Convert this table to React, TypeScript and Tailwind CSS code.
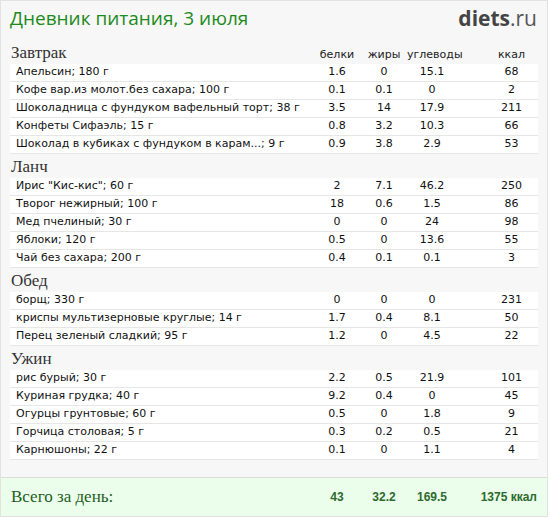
import React from "react";

type Item = { name: string; p: string; f: string; c: string; kcal: string };
type Meal = { title: string; items: Item[] };

const meals: Meal[] = [
  {
    title: "Завтрак",
    items: [
      { name: "Апельсин; 180 г", p: "1.6", f: "0", c: "15.1", kcal: "68" },
      { name: "Кофе вар.из молот.без сахара; 100 г", p: "0.1", f: "0.1", c: "0", kcal: "2" },
      { name: "Шоколадница с фундуком вафельный торт; 38 г", p: "3.5", f: "14", c: "17.9", kcal: "211" },
      { name: "Конфеты Сифаэль; 15 г", p: "0.8", f: "3.2", c: "10.3", kcal: "66" },
      { name: "Шоколад в кубиках с фундуком в карам...; 9 г", p: "0.9", f: "3.8", c: "2.9", kcal: "53" },
    ],
  },
  {
    title: "Ланч",
    items: [
      { name: 'Ирис "Кис-кис"; 60 г', p: "2", f: "7.1", c: "46.2", kcal: "250" },
      { name: "Творог нежирный; 100 г", p: "18", f: "0.6", c: "1.5", kcal: "86" },
      { name: "Мед пчелиный; 30 г", p: "0", f: "0", c: "24", kcal: "98" },
      { name: "Яблоки; 120 г", p: "0.5", f: "0", c: "13.6", kcal: "55" },
      { name: "Чай без сахара; 200 г", p: "0.4", f: "0.1", c: "0.1", kcal: "3" },
    ],
  },
  {
    title: "Обед",
    items: [
      { name: "борщ; 330 г", p: "0", f: "0", c: "0", kcal: "231" },
      { name: "криспы мультизерновые круглые; 14 г", p: "1.7", f: "0.4", c: "8.1", kcal: "50" },
      { name: "Перец зеленый сладкий; 95 г", p: "1.2", f: "0", c: "4.5", kcal: "22" },
    ],
  },
  {
    title: "Ужин",
    items: [
      { name: "рис бурый; 30 г", p: "2.2", f: "0.5", c: "21.9", kcal: "101" },
      { name: "Куриная грудка; 40 г", p: "9.2", f: "0.4", c: "0", kcal: "45" },
      { name: "Огурцы грунтовые; 60 г", p: "0.5", f: "0", c: "1.8", kcal: "9" },
      { name: "Горчица столовая; 5 г", p: "0.3", f: "0.2", c: "0.5", kcal: "21" },
      { name: "Карнюшоны; 22 г", p: "0.1", f: "0", c: "1.1", kcal: "4" },
    ],
  },
];

const cols = "grid grid-cols-[1fr_48px_46px_50px_81px]";

export default function App() {
  return (
    <div className="w-[550px] h-[518px] bg-white">
      <div className="w-[548px] h-[517px] border border-[#e2e2e2] bg-[#f7f7f7] flex flex-col">
        {/* Header */}
        <div className="h-[39px] flex justify-between items-start pl-[9px] pr-[10px] pt-[5px]">
          <div className="text-[19px] text-[#1c8a1c] font-['Open_Sans',sans-serif] leading-[24px]">
            Дневник питания, 3 июля
          </div>
          <div className="text-[21px] text-[#444] font-['Open_Sans',sans-serif] leading-[24px]">
            <span className="font-bold">diets</span>
            <span className="text-[#555]">.ru</span>
          </div>
        </div>

        <div className="px-[9px] font-['DejaVu_Sans',sans-serif]">
          {meals.map((meal, mi) => (
            <div key={meal.title}>
              <div className={`${cols} h-[24px] items-end pb-[2px]`}>
                <div className="text-[17px] leading-[18px] text-[#333] font-['Liberation_Serif',serif] pl-[1px]">
                  {meal.title}
                </div>
                {mi === 0 && (
                  <>
                    <div className="text-[11px] text-[#222] text-center leading-[14px]">белки</div>
                    <div className="text-[11px] text-[#222] text-center leading-[14px]">жиры</div>
                    <div className="text-[11px] text-[#222] text-center leading-[14px]">углеводы</div>
                    <div className="text-[11px] text-[#222] text-center leading-[14px] pl-[28px]">ккал</div>
                  </>
                )}
              </div>
              {meal.items.map((it) => (
                <div
                  key={it.name}
                  className={`${cols} h-[18px] items-center bg-white border-b border-[#e6e6e6] text-[11px] text-[#111]`}
                >
                  <div className="pl-[6px] whitespace-nowrap overflow-hidden">{it.name}</div>
                  <div className="text-center">{it.p}</div>
                  <div className="text-center">{it.f}</div>
                  <div className="text-center">{it.c}</div>
                  <div className="text-center pl-[28px]">{it.kcal}</div>
                </div>
              ))}
            </div>
          ))}
        </div>

        <div className="mt-auto h-[39px] border-t border-[#dcdcdc] bg-[#ebfdeb] px-[9px]">
          <div className={`${cols} h-full items-center`}>
            <div className="text-[17px] text-[#1e5e1e] font-['Liberation_Serif',serif] pl-[1px]">Всего за день:</div>
            <div className="text-center text-[12px] font-bold text-[#2d6a2d] font-['Liberation_Sans',sans-serif]">43</div>
            <div className="text-center text-[12px] font-bold text-[#2d6a2d] font-['Liberation_Sans',sans-serif]">32.2</div>
            <div className="text-center text-[12px] font-bold text-[#2d6a2d] font-['Liberation_Sans',sans-serif]">169.5</div>
            <div className="text-right text-[12px] font-bold text-[#2d6a2d] font-['Liberation_Sans',sans-serif] pr-[1px] whitespace-nowrap">
              1375 ккал
            </div>
          </div>
        </div>
      </div>
    </div>
  );
}
